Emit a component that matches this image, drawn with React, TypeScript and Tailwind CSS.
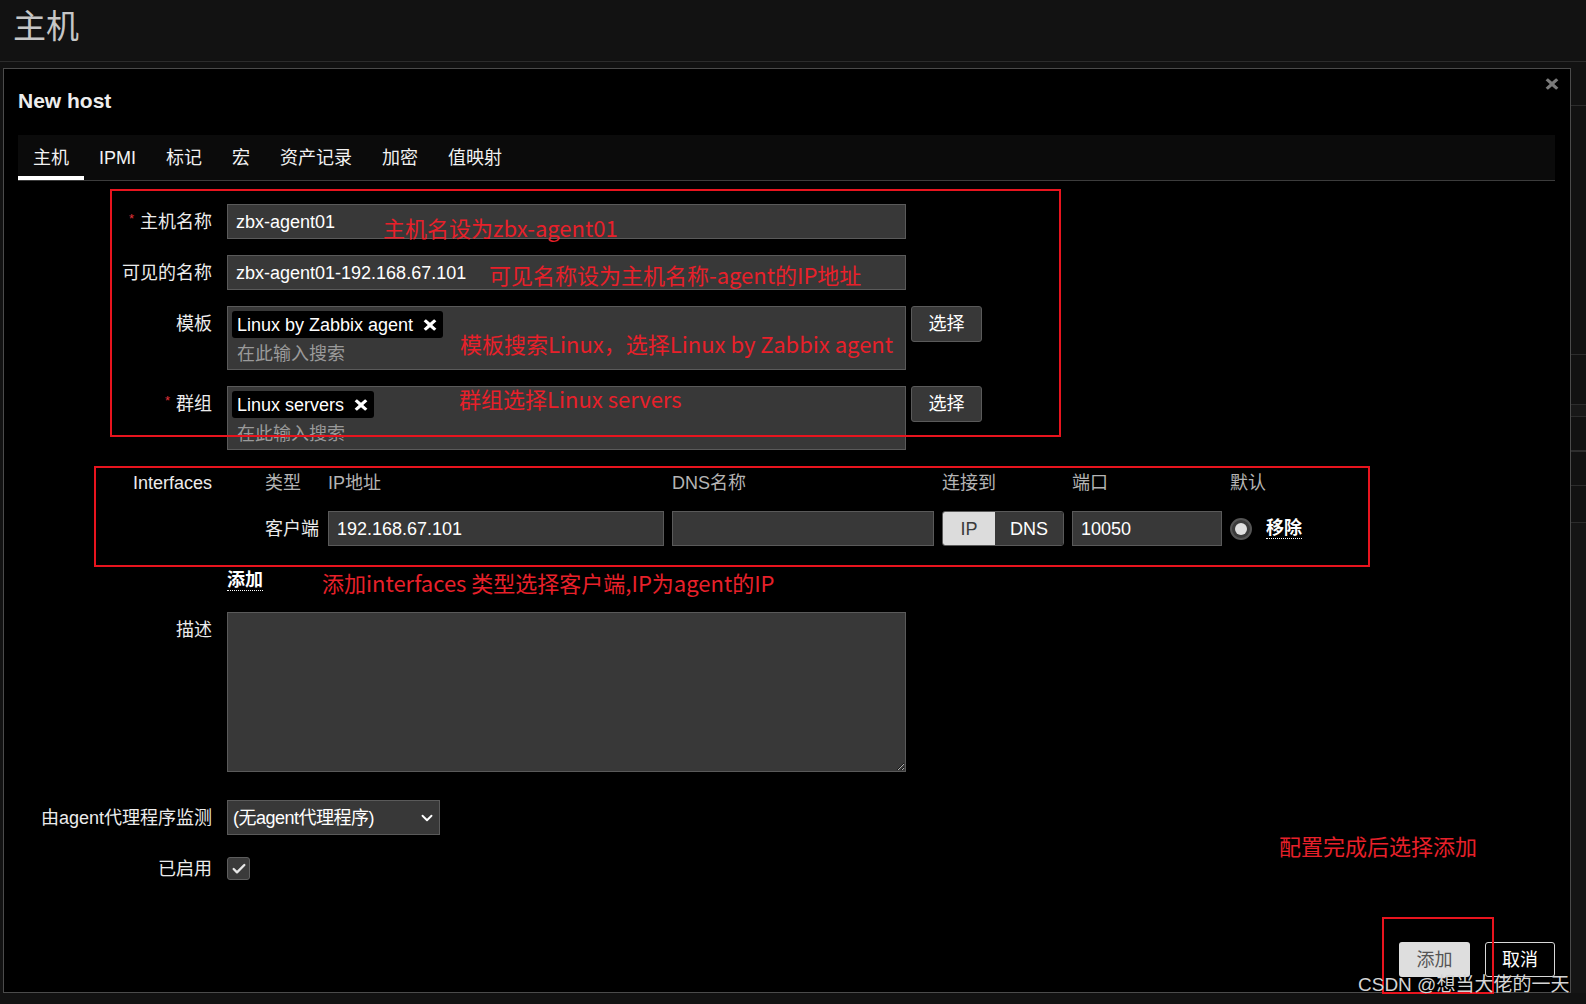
import { Check, ChevronDown } from "lucide-react";
import type { ReactNode } from "react";

const HeavyX = ({ className }: { className?: string }) => (
	<svg viewBox="0 0 16 14" className={className} fill="currentColor" preserveAspectRatio="none">
		<path d="M3.3 0.3 8 4.5 12.7 0.3 15.3 2.6 10.6 7 15.3 11.4 12.7 13.7 8 9.5 3.3 13.7 0.7 11.4 5.4 7 0.7 2.6z" />
	</svg>
);

interface RowProps {
	label: string,
	required?: boolean,
	className?: string,
	children: ReactNode,
}

const Row = (props: RowProps) => {
	return (
		<div className={`flex items-start ${props.className ?? ""}`}>
			<div className="w-[194px] h-[35px] flex items-center justify-end gap-[6px] text-[#ececec]">
				{props.required && <span className="text-[#e0323a] text-[13px] leading-none -mt-[6px]">*</span>}
				<span>{props.label}</span>
			</div>
			<div className="ml-[15px]">{props.children}</div>
		</div>
	)
}

const TextBox = ({ value }: { value: string }) => (
	<div className="w-[679px] h-[35px] bg-[#383838] border border-[#5a5a5a] flex items-center px-[8px] text-white">
		{value}
	</div>
)

const Tag = ({ text }: { text: string }) => (
	<div className="inline-flex items-center h-[27px] bg-black rounded-[3px] pl-[5px] pr-[6px] gap-[10px] text-white">
		<span>{text}</span>
		<HeavyX className="w-[14px] h-[12px]" />
	</div>
)

const MultiSelect = ({ tag }: { tag: string }) => (
	<div className="flex gap-[5px]">
		<div className="w-[679px] h-[64px] bg-[#383838] border border-[#5a5a5a] pl-[4px] pt-[4px]">
			<Tag text={tag} />
			<div className="pl-[5px] mt-[5px] text-[#9a9a9a] leading-[22px]">在此输入搜索</div>
		</div>
		<button type="button" className="w-[71px] h-[36px] bg-[#383838] border border-[#5a5a5a] rounded-[3px] text-white">
			选择
		</button>
	</div>
)

const tabs = ["主机", "IPMI", "标记", "宏", "资产记录", "加密", "值映射"];

const Interfaces = () => {
	return (
		<div className="flex items-start mt-[22px]">
			<div className="w-[194px] h-[22px] text-right text-[#ececec]">Interfaces</div>
			<div className="ml-[53px] grid grid-cols-[55px_336px_262px_122px_150px_30px_auto] gap-x-[8px] items-center">
				<div className="text-[#b4b4b4]">类型</div>
				<div className="text-[#b4b4b4]">IP地址</div>
				<div className="text-[#b4b4b4]">DNS名称</div>
				<div className="text-[#b4b4b4]">连接到</div>
				<div className="text-[#b4b4b4]">端口</div>
				<div className="text-[#b4b4b4] col-span-2">默认</div>

				<div className="mt-[17px] text-[#ececec]">客户端</div>
				<div className="mt-[17px] h-[35px] bg-[#383838] border border-[#5a5a5a] flex items-center px-[8px] text-white">192.168.67.101</div>
				<div className="mt-[17px] h-[35px] bg-[#383838] border border-[#5a5a5a]" />
				<div className="mt-[17px] h-[35px] flex rounded-[3px] overflow-hidden border border-[#5a5a5a]">
					<div className="w-[52px] bg-[#dcdcdc] text-[#3a3a3a] flex items-center justify-center">IP</div>
					<div className="flex-1 bg-[#383838] text-white flex items-center justify-center">DNS</div>
				</div>
				<div className="mt-[17px] h-[35px] bg-[#383838] border border-[#5a5a5a] flex items-center px-[8px] text-white">10050</div>
				<div className="mt-[17px] w-[22px] h-[22px] rounded-full bg-[#3a3a3a] border-2 border-[#555] flex items-center justify-center">
					<div className="w-[12px] h-[12px] rounded-full bg-[#e0e0e0]" />
				</div>
				<div className="mt-[17px] -ml-[2px] font-bold text-white border-b border-dotted border-white leading-[20px]">移除</div>
			</div>
		</div>
	)
}

const Modal = () => {
	return (
		<div className="relative w-[1568px] h-[925px] border border-[#4b4b4b] bg-black flex flex-col pl-[14px] pr-[15px]">
			<button type="button" className="absolute right-[11px] top-[9px] text-[#7a7a7a]">
				<HeavyX className="w-[14px] h-[12px]" />
			</button>
			<h2 className="pt-[20px] text-[21px] leading-[24px] font-bold text-[#ededed]">New host</h2>

			<nav className="mt-[22px] h-[46px] bg-[#0b0b0b] border-b border-[#3c3c3c] flex">
				{tabs.map((t, i) => (
					<div
						key={t}
						className={`h-full px-[15px] pt-[4px] flex items-center border-b-4 text-[#f2f2f2] ${i === 0 ? "border-white" : "border-transparent"}`}
					>
						{t}
					</div>
				))}
			</nav>

			<div className="mt-[23px] flex flex-col">
				<Row label="主机名称" required>
					<TextBox value="zbx-agent01" />
				</Row>
				<Row label="可见的名称" className="mt-[16px]">
					<TextBox value="zbx-agent01-192.168.67.101" />
				</Row>
				<Row label="模板" className="mt-[16px]">
					<MultiSelect tag="Linux by Zabbix agent" />
				</Row>
				<Row label="群组" required className="mt-[16px]">
					<MultiSelect tag="Linux servers" />
				</Row>

				<Interfaces />

				<div className="mt-[23px] ml-[209px]">
					<span className="font-bold text-white border-b border-dotted border-white leading-[20px] inline-block">添加</span>
				</div>

				<Row label="描述" className="mt-[21px]">
					<textarea
						readOnly
						className="block w-[679px] h-[160px] bg-[#383838] border border-[#5a5a5a] outline-none text-white"
					/>
				</Row>

				<Row label="由agent代理程序监测" className="mt-[28px]">
					<div className="w-[213px] h-[35px] bg-[#383838] border border-[#5a5a5a] flex items-center justify-between pl-[5px] pr-[3px] text-white">
						<span className="tracking-[-0.5px]">(无agent代理程序)</span>
						<ChevronDown size={18} strokeWidth={2.5} />
					</div>
				</Row>

				<div className="flex items-center mt-[22px]">
					<div className="w-[194px] text-right text-[#ececec]">已启用</div>
					<div className="ml-[15px] w-[23px] h-[23px] rounded-[3px] bg-[#3a3a3a] border border-[#5e5e5e] flex items-center justify-center text-[#e6e6e6]">
						<Check size={16} strokeWidth={3.5} />
					</div>
				</div>
			</div>

			<div className="mt-auto pb-[15px] flex justify-end gap-[15px]">
				<button type="button" className="w-[71px] h-[35px] bg-[#dedede] rounded-[3px] text-[#555]">添加</button>
				<button type="button" className="w-[70px] h-[35px] border border-[#d8d8d8] rounded-[3px] text-white">取消</button>
			</div>
		</div>
	)
}

const RightStrip = () => {
	return (
		<div className="w-[15px] flex flex-col bg-[#121212]">
			<div className="h-[37px]" />
			<div className="h-[249px] border-t border-[#2c2c2c]" />
			<div className="h-[50px] border-t border-[#2c2c2c]" />
			<div className="h-[12px] border-t border-[#2c2c2c] bg-[#181818]" />
			<div className="h-[34px] border-t border-[#2c2c2c]" />
			<div className="h-[35px] border-t-2 border-[#2e2e2e]" />
			<div className="h-[37px] border-t border-[#2c2c2c]" />
			<div className="flex-1 border-t border-[#2c2c2c] bg-[#151515]" />
		</div>
	)
}

const Annotations = () => {
	return (
		<div className="pointer-events-none absolute inset-0 font-['Noto_Sans_CJK_SC',sans-serif] text-[22px] leading-[30px] text-[#e8202a]">
			<div className="absolute left-[110px] top-[189px] w-[951px] h-[248px] border-2 border-[#e8141e]" />
			<div className="absolute left-[94px] top-[466px] w-[1276px] h-[101px] border-2 border-[#e8141e]" />
			<div className="absolute left-[1382px] top-[917px] w-[112px] h-[77px] border-2 border-[#e8141e]" />

			<div className="absolute left-[383px] top-[212px]">主机名设为zbx-agent01</div>
			<div className="absolute left-[489px] top-[259px]">可见名称设为主机名称-agent的IP地址</div>
			<div className="absolute left-[460px] top-[328px]">模板搜索Linux，选择Linux by Zabbix agent</div>
			<div className="absolute left-[459px] top-[383px]">群组选择Linux servers</div>
			<div className="absolute left-[322px] top-[567px]">添加interfaces 类型选择客户端,IP为agent的IP</div>
			<div className="absolute left-[1279px] top-[830px]">配置完成后选择添加</div>

			<div className="absolute left-[1358px] top-[972px] text-[19px] leading-[26px] text-[#d4d4d4] font-['Liberation_Sans','Noto_Sans_CJK_SC',sans-serif]">
				CSDN @想当大佬的一天
			</div>
		</div>
	)
}

export default function App() {
	return (
		<div className="relative w-[1586px] h-[1004px] overflow-hidden bg-[#121212] font-['Liberation_Sans','Noto_Sans_CJK_SC',sans-serif] text-[18px] leading-[22px] text-[#f0f0f0]">
			<header className="h-[62px] border-b border-[#2c2c2c] pl-[13px] pt-[7px]">
				<h1 className="text-[33px] leading-[40px] text-[#c6c6c6]">主机</h1>
			</header>
			<div className="flex mt-[6px]">
				<div className="w-[3px]" />
				<Modal />
				<RightStrip />
			</div>
			<Annotations />
		</div>
	)
}
